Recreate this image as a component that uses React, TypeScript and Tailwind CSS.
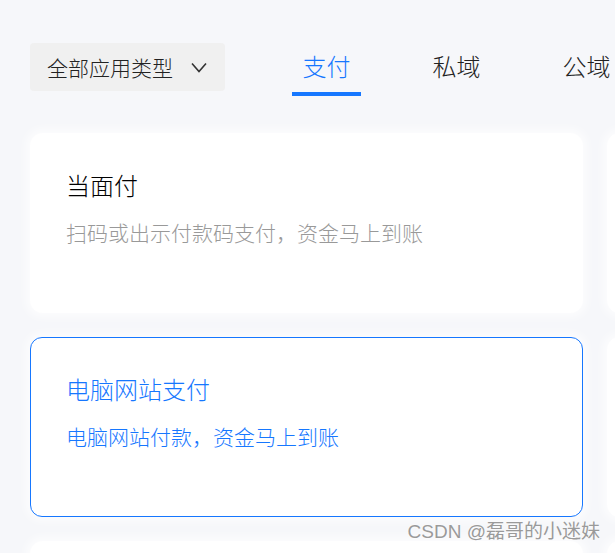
import React from 'react';

const tabs = ['支付', '私域', '公域'];

const cards = [
  { title: '当面付', desc: '扫码或出示付款码支付，资金马上到账', active: false },
  { title: '', desc: '', active: false },
  { title: '电脑网站支付', desc: '电脑网站付款，资金马上到账', active: true },
  { title: '', desc: '', active: false },
  { title: '', desc: '', active: false },
  { title: '', desc: '', active: false },
];

export default function App() {
  return (
    <div
      className="relative h-[553px] w-[615px] overflow-hidden bg-[#f6f7fa] font-light"
      style={{ fontFamily: '"Noto Sans CJK SC", "Noto Sans", sans-serif' }}
    >
      <div className="pl-[30px] pt-[43px]">
        <div className="flex items-start">
          <div className="flex h-12 w-[195px] shrink-0 items-center rounded bg-[#f0f0f0] pl-[17px]">
            <span className="text-[21px] leading-none text-[#222]">全部应用类型</span>
            <svg className="ml-[18px]" width="16" height="11" viewBox="0 0 16 11" fill="none">
              <path d="M1 1.5 L8 9.5 L15 1.5" stroke="#333" strokeWidth="1.6" />
            </svg>
          </div>

          <div className="ml-[67px] flex shrink-0 gap-[61px]">
            {tabs.map((t, i) => (
              <div key={t} className="flex w-[69px] shrink-0 flex-col items-center">
                <span
                  className={`pt-[7px] text-[24px] leading-[32px] ${i === 0 ? 'text-[#1677ff]' : 'text-[#222]'}`}
                >
                  {t}
                </span>
                <div className={`mt-[10px] h-1 w-[69px] ${i === 0 ? 'bg-[#1677ff]' : 'bg-transparent'}`} />
              </div>
            ))}
          </div>
        </div>

        <div className="mt-[37px] grid w-[1130px] grid-cols-[553px_553px] gap-6">
          {cards.map((c, i) => (
            <div
              key={i}
              className={`h-[180px] rounded-xl bg-white px-[35px] pt-[35px] shadow-[0_0_10px_4px_rgba(255,255,255,0.7)] ${
                c.active ? 'border border-[#1677ff]' : 'border border-white'
              }`}
            >
              {c.title && (
                <>
                  <div className={`text-[24px] leading-[32px] ${c.active ? 'text-[#1677ff]' : 'text-black'}`}>
                    {c.title}
                  </div>
                  <div
                    className={`mt-[17px] text-[21px] leading-[28px] ${c.active ? 'text-[#1677ff]' : 'text-[#999]'}`}
                  >
                    {c.desc}
                  </div>
                </>
              )}
            </div>
          ))}
        </div>
      </div>

      <div
        className="absolute right-[15px] top-[520px] text-[19px] font-normal leading-6 text-[#9a9a9a]"
        style={{ fontFamily: '"Liberation Sans", "Noto Sans CJK SC", sans-serif', textShadow: '0 0 2px #fff' }}
      >
        CSDN @磊哥的小迷妹
      </div>
    </div>
  );
}
